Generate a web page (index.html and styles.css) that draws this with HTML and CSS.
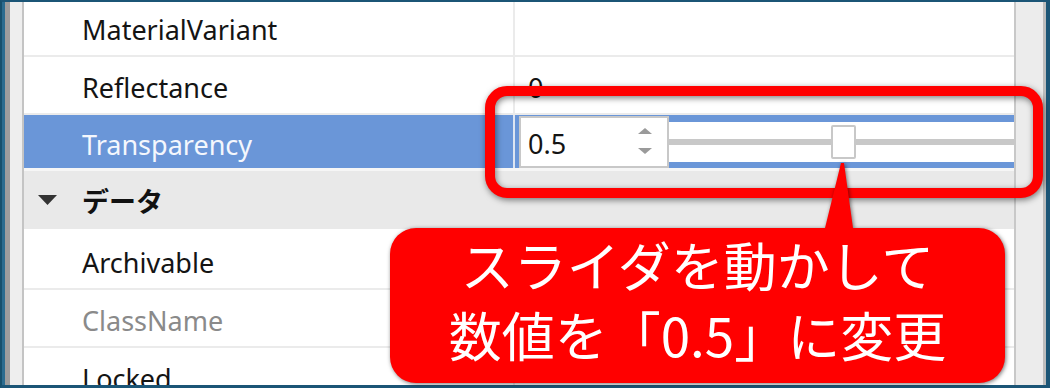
FILE: index.html
```html
<!DOCTYPE html>
<html lang="ja">
<head>
    <meta charset="UTF-8">
    <meta name="viewport" content="width=device-width, initial-scale=1.0">
    <title>プロパティ</title>
    <link rel="stylesheet" href="styles.css">
</head>
<body>
    <div class="shot">
        <div class="window">
            <div class="gutter"></div>
            <div class="props">
                <div class="list">
                    <div class="row">
                        <div class="name">MaterialVariant</div>
                        <div class="value"></div>
                    </div>
                    <div class="row">
                        <div class="name">Reflectance</div>
                        <div class="value">0</div>
                    </div>
                    <div class="row selected">
                        <div class="name">Transparency</div>
                        <div class="value">
                            <div class="num-input">
                                <span>0.5</span>
                                <svg class="spin" width="14" height="26" viewBox="0 0 14 26">
                                    <polygon points="0,6 7,0 14,6" />
                                    <polygon points="0,20 14,20 7,26" />
                                </svg>
                            </div>
                            <div class="slider">
                                <div class="track"></div>
                                <div class="thumb"></div>
                            </div>
                        </div>
                    </div>
                    <div class="section">
                        <svg class="caret" width="19" height="10" viewBox="0 0 19 10">
                            <polygon points="0,0 19,0 9.5,10" />
                        </svg>
                        <span>データ</span>
                    </div>
                    <div class="row">
                        <div class="name">Archivable</div>
                        <div class="value"></div>
                    </div>
                    <div class="row">
                        <div class="name muted">ClassName</div>
                        <div class="value"></div>
                    </div>
                    <div class="row">
                        <div class="name">Locked</div>
                        <div class="value"></div>
                    </div>
                </div>
            </div>
            <div class="scrollbar"></div>
        </div>

        <!-- 注釈 -->
        <div class="highlight"></div>
        <div class="callout">
            <svg class="callout-shape" width="615" height="223" viewBox="0 0 615 223">
                <path d="M26,68 H435 L451,3 L454,3 L463,68 H589 A26,26 0 0 1 615,94 V197 A26,26 0 0 1 589,223 H26 A26,26 0 0 1 0,197 V94 A26,26 0 0 1 26,68 Z" />
            </svg>
            <p>スライダを動かして<br>数値を「0.5」に変更</p>
        </div>
    </div>
</body>
</html>
```

FILE: styles.css
```css
body {
    margin: 0;
    background-color: #ffffff;
    font-family: "Noto Sans", "Noto Sans CJK JP", sans-serif;
}
.shot {
    position: relative;
    width: 1050px;
    height: 388px;
    overflow: hidden;
}
.window {
    display: flex;
    width: 1050px;
    height: 388px;
    box-sizing: border-box;
    border-top: 2px solid #1b5576;
    border-left: 2px solid #17506c;
    border-right: 4px solid #1b5576;
    border-bottom: 3px solid #1b5576;
    overflow: hidden;
}
.gutter {
    width: 22px;
    flex-shrink: 0;
    background: linear-gradient(to right, #2b6c8f 0 3px, #9d9d9d 3px 8px, #eeeeee 8px 20px, #c4c4c4 20px 22px);
}
.props {
    flex: 1;
    overflow: hidden;
}
.list {
    margin-top: -3px;
}
.row {
    display: flex;
    height: 56px;
    border-bottom: 2px solid #ebebeb;
    font-size: 27px;
    color: #141414;
}
.name {
    width: 489px;
    flex-shrink: 0;
    box-sizing: border-box;
    padding: 5px 0 0 58px;
    display: flex;
    align-items: center;
}
.name.muted {
    color: #8a8a8a;
}
.value {
    flex: 1;
    display: flex;
    align-items: center;
    border-left: 2px solid #ebebeb;
    padding: 5px 0 0 13px;
}
.selected {
    height: 53px;
    border-bottom-width: 3px;
    border-bottom-color: #f6f6f6;
    background-color: #6a96d8;
}
.selected .name {
    color: #f4f7fd;
}
.selected .value {
    padding: 0 0 0 4px;
    border-left-color: #dde5f2;
}
.num-input {
    width: 150px;
    height: 52px;
    box-sizing: border-box;
    border: 2px solid #c8c8c8;
    background-color: #ffffff;
    display: flex;
    align-items: center;
    justify-content: space-between;
    padding: 4px 15px 0 7px;
    color: #141414;
}
.spin {
    fill: #9a9a9a;
    margin-top: -6px;
}
.slider {
    flex: 1;
    position: relative;
    height: 40px;
    background-color: #ffffff;
    display: flex;
    align-items: center;
}
.track {
    width: 100%;
    height: 6px;
    background-color: #c8c8c8;
}
.thumb {
    position: absolute;
    left: 162px;
    top: 3px;
    width: 25px;
    height: 34px;
    box-sizing: border-box;
    border: 2px solid #c8c8c8;
    border-radius: 2px;
    background-color: #ffffff;
}
.section {
    display: flex;
    align-items: center;
    height: 58px;
    border-bottom: 3px solid #ffffff;
    background-color: #e9e9e9;
    padding-left: 14px;
    font-family: "Noto Sans CJK JP", sans-serif;
    font-weight: 700;
    font-size: 27px;
    color: #111111;
}
.caret {
    fill: #333333;
    margin-right: 25px;
}
.scrollbar {
    width: 32px;
    flex-shrink: 0;
    background: linear-gradient(to right, #c8c8c8 0 2px, #ececec 2px 29px, #bdbdbd 29px 32px);
}
.highlight {
    position: absolute;
    left: 485px;
    top: 86px;
    width: 558px;
    height: 112px;
    box-sizing: border-box;
    border: 10px solid #ff0000;
    border-radius: 22px;
    filter: drop-shadow(1px 2px 3px rgba(0, 0, 0, 0.5));
}
.callout {
    position: absolute;
    left: 390px;
    top: 160px;
    width: 615px;
    height: 223px;
}
.callout-shape {
    position: absolute;
    left: 0;
    top: 0;
    fill: #ff0000;
    filter: drop-shadow(1px 1px 2px rgba(0, 0, 0, 0.55));
}
.callout p {
    position: relative;
    margin: 0;
    padding-top: 69px;
    text-align: center;
    font-family: "Noto Sans CJK JP", sans-serif;
    font-weight: 400;
    font-size: 53px;
    line-height: 70px;
    color: #ffffff;
}
```
